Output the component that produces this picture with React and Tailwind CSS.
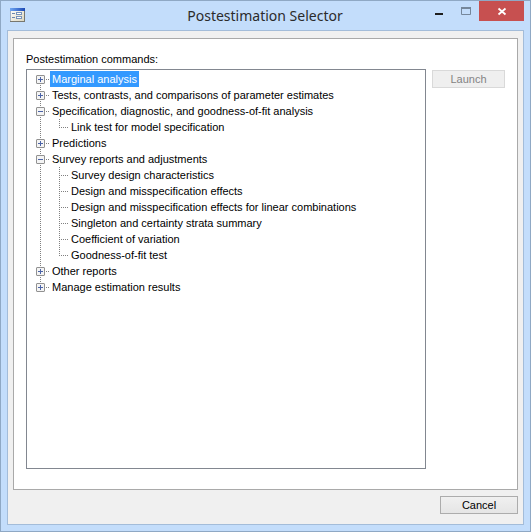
import React, { useState } from "react";

const COMMANDS = [
  { label: "Marginal analysis", children: [] },
  { label: "Tests, contrasts, and comparisons of parameter estimates", children: [] },
  {
    label: "Specification, diagnostic, and goodness-of-fit analysis",
    children: ["Link test for model specification"]
  },
  { label: "Predictions", children: [] },
  {
    label: "Survey reports and adjustments",
    children: [
      "Survey design characteristics",
      "Design and misspecification effects",
      "Design and misspecification effects for linear combinations",
      "Singleton and certainty strata summary",
      "Coefficient of variation",
      "Goodness-of-fit test"
    ]
  },
  { label: "Other reports", children: [] },
  { label: "Manage estimation results", children: [] }
];

// dotted connector used by every row
const Dots = (props) => (
  <line stroke="#808080" strokeDasharray="1 1" shapeRendering="crispEdges" {...props} />
);

const AppIcon = () => (
  <svg width="15" height="14" viewBox="0 0 15 14" className="shrink-0">
    <defs>
      <linearGradient id="bar" x1="0" x2="1" y1="0" y2="0">
        <stop offset="0" stopColor="#6fa6f2" />
        <stop offset="1" stopColor="#1c49b5" />
      </linearGradient>
      <linearGradient id="sheet" x1="0" x2="1" y1="0" y2="1">
        <stop offset="0" stopColor="#ffffff" />
        <stop offset="1" stopColor="#dcd6bd" />
      </linearGradient>
    </defs>
    <rect x="0.5" y="0.5" width="14" height="13" fill="url(#sheet)" stroke="#a3b2c4" />
    <path d="M0 13.5h15M14.5 3v11" stroke="#77776f" />
    <rect width="15" height="3" fill="url(#bar)" />
    <path d="M2 5.5h3M2 9.5h3" stroke="#6c86ad" />
    <rect x="6.5" y="4.5" width="5" height="2" fill="#fff" stroke="#7893bb" />
    <rect x="6.5" y="8.5" width="5" height="2" fill="#fff" stroke="#7893bb" />
  </svg>
);

const Toggle = ({ open, first, last }) => (
  <svg width="14" height="16" viewBox="0 0 14 16" className="block">
    {!first && <Dots x1="4.5" y1="0" x2="4.5" y2="4" />}
    {!last && <Dots x1="4.5" y1="12" x2="4.5" y2="16" />}
    <Dots x1="10" y1="8.5" x2="14" y2="8.5" />
    <rect x="0.5" y="4.5" width="8" height="8" rx="0.5" fill="#f4f4f4" stroke="#919191" />
    <path d={open ? "M2 8.5h5" : "M2 8.5h5M4.5 6v5"} stroke="#4b63a7" shapeRendering="crispEdges" />
  </svg>
);

const Branch = ({ last }) => (
  <svg width="33" height="16" viewBox="0 0 33 16" className="block shrink-0">
    <Dots x1="4.5" y1="0" x2="4.5" y2="16" />
    <Dots x1="23.5" y1="0" x2="23.5" y2={last ? "9" : "16"} />
    <Dots x1="23" y1="8.5" x2="32" y2="8.5" />
  </svg>
);

const Label = ({ text, selected, onSelect }) => (
  <button
    type="button"
    onClick={() => onSelect(text)}
    className={
      selected
        ? "h-4 px-0.5 leading-4 whitespace-nowrap bg-[#3399ff] text-white"
        : "h-4 px-0.5 leading-4 whitespace-nowrap"
    }
  >
    {text}
  </button>
);

const CommandTree = ({ selected, onSelect }) => {
  const [closed, setClosed] = useState({});

  return (
    <ul
      aria-labelledby="commands-label"
      className="flex-1 min-w-0 overflow-auto border border-[#828790] bg-white pl-[9px] pt-px"
    >
      {COMMANDS.map((group, i) => {
        const open = group.children.length > 0 && !closed[group.label];
        return (
          <li key={group.label}>
            <div className="flex">
              <button
                type="button"
                aria-label={"Toggle " + group.label}
                onClick={() => setClosed({ ...closed, [group.label]: open })}
              >
                <Toggle open={open} first={i === 0} last={i === COMMANDS.length - 1} />
              </button>
              <Label text={group.label} selected={selected === group.label} onSelect={onSelect} />
            </div>
            {open && (
              <ul>
                {group.children.map((child, j) => (
                  <li key={child} className="flex">
                    <Branch last={j === group.children.length - 1} />
                    <Label text={child} selected={selected === child} onSelect={onSelect} />
                  </li>
                ))}
              </ul>
            )}
          </li>
        );
      })}
    </ul>
  );
};

const App = () => {
  const [selected, setSelected] = useState("Marginal analysis");
  const groupSelected = COMMANDS.some((g) => g.label === selected);

  return (
    <div className="min-h-screen flex flex-col border border-[#8fa8c4] bg-[#c3ddfb] px-1.5 pb-1.5 font-['Liberation_Sans',Arial,sans-serif] text-[11px] text-black">
      {/* ---------- TITLE BAR ---------- */}
      <header className="flex h-[29px] items-start justify-between">
        <div className="flex flex-1 pl-[3px] pt-[7px]">
          <AppIcon />
        </div>
        <h1 className="pr-1 font-['Noto_Sans','Segoe_UI',sans-serif] text-[14px] leading-[29px] text-[#2b2b2b]">
          Postestimation Selector
        </h1>
        <div className="flex flex-1 justify-end">
          <button type="button" aria-label="Minimize" className="h-5 w-[27px]">
            <svg width="27" height="20" viewBox="0 0 27 20">
              <rect x="10" y="12" width="8" height="2" fill="#1e1e1e" />
            </svg>
          </button>
          <button type="button" aria-label="Maximize" className="h-5 w-[27px]">
            <svg width="27" height="20" viewBox="0 0 27 20">
              <path d="M9.5 7v6.5h9V7" fill="none" stroke="#75879b" />
              <rect x="9" y="6" width="10" height="2" fill="#75879b" />
            </svg>
          </button>
          <button type="button" aria-label="Close" className="h-5 w-[45px] bg-[#c75050]">
            <svg width="45" height="20" viewBox="0 0 45 20">
              <path d="M19.5 7.5l7 6M26.5 7.5l-7 6" stroke="#fff" strokeWidth="1.8" />
            </svg>
          </button>
        </div>
      </header>

      {/* ---------- DIALOG BODY ---------- */}
      <main className="flex flex-1 flex-col border border-[#a3bcd9] bg-[#f0f0f0] pl-[5px] pr-[5px] pt-[7px] pb-2.5">
        <section className="flex flex-1 flex-col border border-[#a9a9a9] bg-white pl-3 pr-3 pt-3 pb-5">
          <p id="commands-label" className="mb-1 h-3.5 leading-4">
            Postestimation commands:
          </p>
          <div className="flex flex-1 gap-1.5">
            <CommandTree selected={selected} onSelect={setSelected} />
            <button
              type="button"
              disabled={groupSelected}
              className="mt-px h-[18px] w-[73px] border border-[#adadad] bg-[#efefef] leading-4 disabled:border-[#d9d9d9] disabled:text-[#838383]"
            >
              Launch
            </button>
          </div>
        </section>
        <button
          type="button"
          className="mt-1.5 h-[18px] w-[78px] self-end border border-[#acacac] bg-linear-to-b from-[#f0f0f0] to-[#e5e5e5] leading-4"
        >
          Cancel
        </button>
      </main>
    </div>
  );
};

export default App;
